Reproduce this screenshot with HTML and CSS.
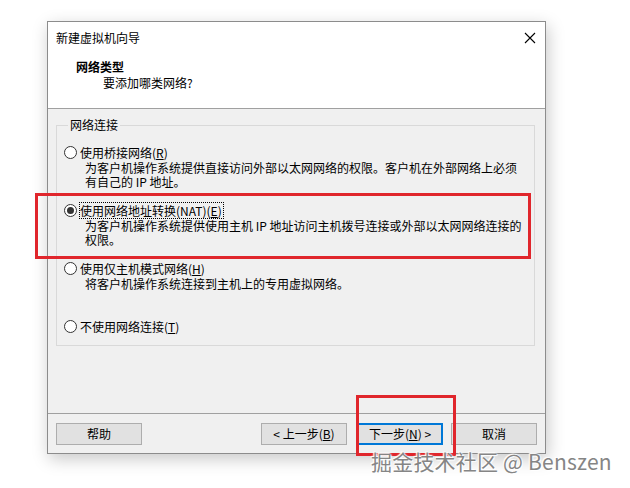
FILE: index.html
```html
<!DOCTYPE html>
<html lang="zh-CN">
<head>
<meta charset="utf-8">
<title>新建虚拟机向导</title>
<link rel="stylesheet" href="styles.css">
</head>
<body>
<div class="stage">
  <div class="window">
    <div class="titlebar">
      <span class="title">新建虚拟机向导</span>
      <svg class="close" width="12" height="12" viewBox="0 0 12 12"><path d="M1 1 L11 11 M11 1 L1 11" stroke="#000" stroke-width="1.1" fill="none"/></svg>
    </div>
    <div class="header">
      <div class="h-title">网络类型</div>
      <div class="h-sub">要添加哪类网络?</div>
    </div>
    <div class="content">
      <fieldset class="group">
        <legend>网络连接</legend>
        <div class="option">
          <div class="radio-row"><span class="radio"></span><span class="label">使用桥接网络(<u>R</u>)</span></div>
          <div class="desc">为客户机操作系统提供直接访问外部以太网网络的权限。客户机在外部网络上必须<br>有自己的 IP 地址。</div>
        </div>
        <div class="option">
          <div class="radio-row"><span class="radio checked"></span><span class="label focused">使用网络地址转换(NAT)(<u>E</u>)</span></div>
          <div class="desc">为客户机操作系统提供使用主机 IP 地址访问主机拨号连接或外部以太网网络连接的<br>权限。</div>
        </div>
        <div class="option">
          <div class="radio-row"><span class="radio"></span><span class="label">使用仅主机模式网络(<u>H</u>)</span></div>
          <div class="desc">将客户机操作系统连接到主机上的专用虚拟网络。</div>
        </div>
        <div class="option last">
          <div class="radio-row"><span class="radio"></span><span class="label">不使用网络连接(<u>T</u>)</span></div>
        </div>
      </fieldset>
    </div>
    <div class="footer">
      <button class="btn">帮助</button>
      <span class="spacer"></span>
      <button class="btn">&lt; 上一步(<u>B</u>)</button>
      <button class="btn default">下一步(<u>N</u>) &gt;</button>
      <button class="btn cancel">取消</button>
    </div>
  </div>
  <div class="mark mark-nat"></div>
  <div class="mark mark-next"></div>
  <div class="watermark">掘金技术社区 @ Benszen</div>
</div>
</body>
</html>
```
FILE: styles.css
```css
* { box-sizing: border-box; }
html, body {
  margin: 0;
  padding: 0;
  background: #ffffff;
}
body {
  font-family: "Noto Sans CJK SC", "Noto Sans", sans-serif;
  font-size: 12px;
  color: #000;
  width: 630px;
  height: 488px;
  overflow: hidden;
}
.stage {
  position: relative;
  width: 630px;
  height: 488px;
  padding: 21px 0 0 47px;
}
.window {
  width: 499px;
  height: 433px;
  border: 1px solid #8c8c8c;
  background: #f0f0f0;
  display: flex;
  flex-direction: column;
  box-shadow: 2px 5px 16px rgba(0, 0, 0, 0.22);
}
.titlebar {
  height: 32px;
  background: #fff;
  display: flex;
  align-items: center;
  justify-content: space-between;
  padding: 0 9px 0 8px;
  line-height: 16px;
}
.close { display: block; }
.header {
  height: 55px;
  background: #fff;
  border-bottom: 1px solid #a0a0a0;
  padding-top: 5px;
  line-height: 16px;
}
.h-title {
  font-weight: bold;
  padding-left: 28px;
}
.h-sub {
  padding-left: 55px;
}
.content {
  flex: 1;
  padding: 8px 10px 0 8px;
}
.group {
  margin: 0;
  border: 1px solid #d9d9d9;
  padding: 11px 0 10px 7px;
  min-width: 0;
}
.group legend {
  margin-left: 4px;
  padding: 0 2px;
  line-height: 16px;
}
.option {
  margin-bottom: 13px;
}
.option.last {
  margin-top: 2px;
  margin-bottom: 0;
}
.radio-row {
  display: flex;
  align-items: center;
  height: 17px;
}
.radio {
  width: 13px;
  height: 13px;
  border: 1px solid #333;
  border-radius: 50%;
  background: #fff;
  margin-right: 3px;
  display: flex;
  align-items: center;
  justify-content: center;
  flex: none;
}
.radio.checked::after {
  content: "";
  width: 7px;
  height: 7px;
  border-radius: 50%;
  background: #333;
}
.label {
  line-height: 15px;
  padding: 0 1px 0 0;
}
.label.focused {
  outline: 1px dotted #000;
  outline-offset: 0;
}
.desc {
  padding-left: 21px;
  line-height: 14px;
  min-height: 28px;
  white-space: nowrap;
}
.footer {
  border-top: 1px solid #a0a0a0;
  padding: 9px 8px 8px 8px;
  display: flex;
  align-items: center;
}
.spacer { flex: 1; }
.btn {
  width: 86px;
  height: 22px;
  border: 1px solid #adadad;
  background: #e1e1e1;
  font-family: inherit;
  font-size: 12px;
  line-height: 16px;
  color: #000;
  padding: 0;
  margin: 0;
}
.btn.default {
  border: 2px solid #0078d7;
  margin-left: 10px;
}
.btn.cancel {
  margin-left: 8px;
}
.mark {
  position: absolute;
  border: 3px solid #e0262c;
}
.mark-nat {
  left: 35px;
  top: 193px;
  width: 496px;
  height: 66px;
}
.mark-next {
  left: 356px;
  top: 395px;
  width: 100px;
  height: 61px;
}
.watermark {
  position: absolute;
  left: 371px;
  top: 447px;
  font-size: 21px;
  line-height: 28px;
  color: #858585;
  letter-spacing: 0.2px;
  white-space: nowrap;
  text-shadow: 0 0 2px #fff, 0 0 2px #fff, 1px 1px 1px #fff, -1px -1px 1px #fff;
}
```
